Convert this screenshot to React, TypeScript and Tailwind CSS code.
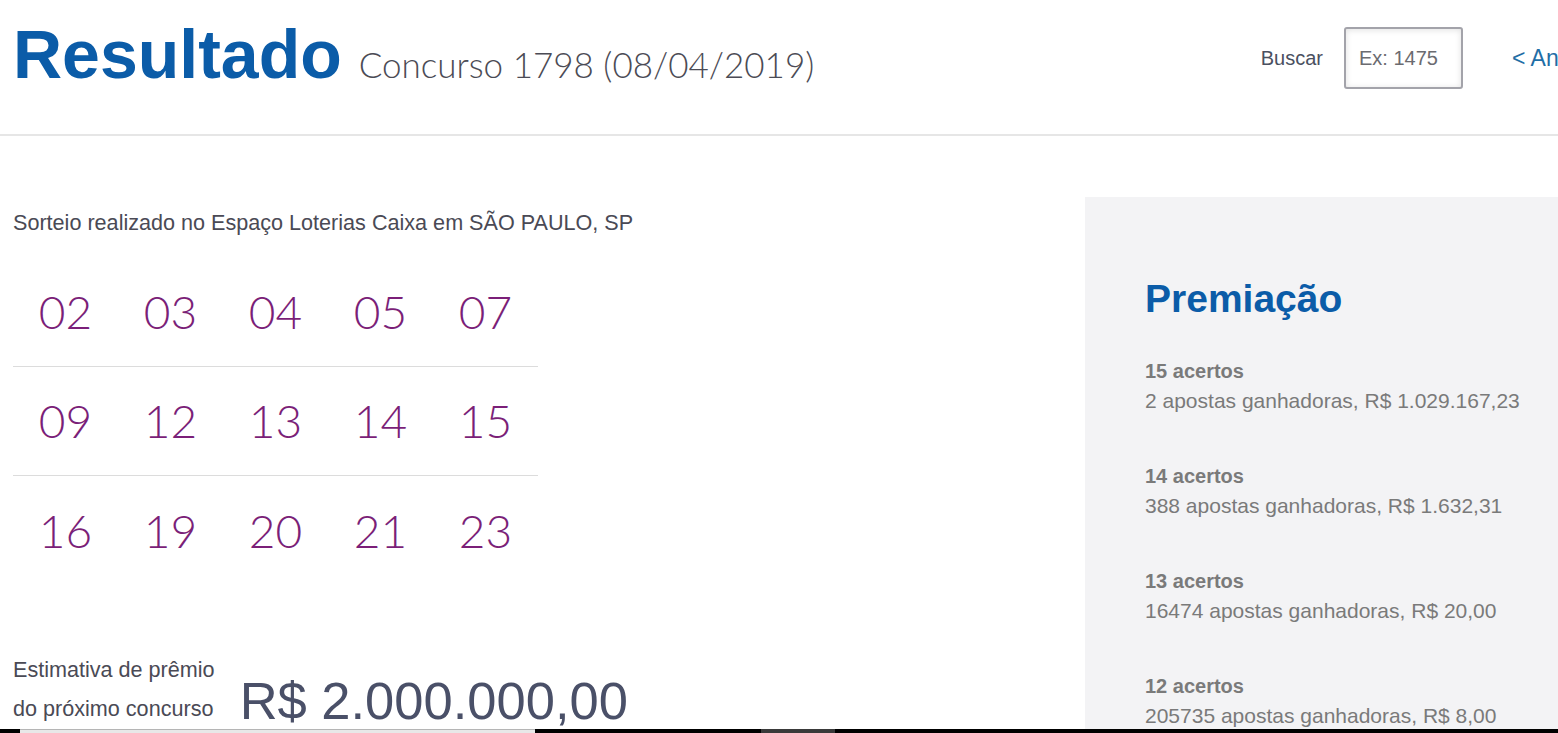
import type { FC } from 'react'

const numeros = [
  ['02', '03', '04', '05', '07'],
  ['09', '12', '13', '14', '15'],
  ['16', '19', '20', '21', '23'],
]

const premios = [
  { faixa: '15 acertos', detalhe: '2 apostas ganhadoras, R$ 1.029.167,23' },
  { faixa: '14 acertos', detalhe: '388 apostas ganhadoras, R$ 1.632,31' },
  { faixa: '13 acertos', detalhe: '16474 apostas ganhadoras, R$ 20,00' },
  { faixa: '12 acertos', detalhe: '205735 apostas ganhadoras, R$ 8,00' },
]

const sans = "font-['Liberation_Sans',Arial,sans-serif]"

const Header: FC = () => (
  <div className="flex items-start h-[136px] pl-[13px] border-b-2 border-[#e6e6e6] overflow-hidden whitespace-nowrap">
    <div className="flex items-baseline pt-[20px]">
      <h1 className={`${sans} text-[68px] leading-none font-bold text-[#0b5ca8]`}>Resultado</h1>
      <span className="ml-[17px] font-['Lato',sans-serif] font-light text-[35px] leading-none text-[#4b4b55]">
        Concurso 1798 (08/04/2019)
      </span>
    </div>
    <div className="ml-auto flex items-center pt-[27px] shrink-0">
      <span className={`${sans} text-[20px] text-[#4a5060]`}>Buscar</span>
      <input
        className={`${sans} ml-[21px] w-[119px] h-[62px] border-2 border-[#a3a3aa] rounded-[3px] px-[13px] text-[20px] text-[#555] placeholder:text-[#6b6b70] shadow-[inset_0_1px_6px_rgba(0,0,0,0.12)] outline-none`}
        placeholder="Ex: 1475"
      />
      <a className={`${sans} ml-[49px] text-[23px] text-[#1f6ea6] w-[46px] overflow-hidden`} href="#">
        &lt; Anterior
      </a>
    </div>
  </div>
)

const Resultado: FC = () => (
  <div className="w-[1085px] shrink-0 pl-[13px] pt-[13px]">
    <p className={`${sans} text-[21.6px] leading-[26px] text-[#4a4a55]`}>
      Sorteio realizado no Espaço Loterias Caixa em SÃO PAULO, SP
    </p>
    <div className="mt-[22px] w-[525px]">
      {numeros.map((linha, i) => (
        <div
          key={i}
          className={`grid grid-cols-5 h-[109px] items-center ${i < 2 ? 'border-b border-[#dcdcdc]' : ''}`}
        >
          {linha.map((n) => (
            <span key={n} className="text-center font-['Lato',sans-serif] font-light text-[46px] leading-none text-[#7b1f78]">
              {n}
            </span>
          ))}
        </div>
      ))}
    </div>
    <div className="mt-[65px] flex items-end">
      <div className={`${sans} text-[21.6px] leading-[39px] text-[#4a4a55]`}>
        <div>Estimativa de prêmio</div>
        <div>do próximo concurso</div>
      </div>
      <span className={`${sans} ml-[25px] mb-[1px] text-[52.5px] leading-none text-[#4a5068]`}>R$ 2.000.000,00</span>
    </div>
  </div>
)

const Premiacao: FC = () => (
  <div className="flex-1 bg-[#f3f3f5] pl-[60px] pt-[82px] whitespace-nowrap">
    <h2 className={`${sans} text-[39px] leading-none font-bold text-[#0b5ca8]`}>Premiação</h2>
    <div className="mt-[38px] flex flex-col gap-[45px]">
      {premios.map((p) => (
        <div key={p.faixa} className={`${sans} text-[#7a7a7a]`}>
          <div className="text-[20px] leading-[30px] font-bold">{p.faixa}</div>
          <div className="text-[21px] leading-[30px]">{p.detalhe}</div>
        </div>
      ))}
    </div>
  </div>
)

export default function App() {
  return (
    <div className="w-[1558px] h-[733px] overflow-hidden flex flex-col bg-white">
      <div className="flex-1 min-h-0 overflow-hidden flex flex-col">
        <Header />
        <div className="flex flex-1 pt-[61px] min-h-0">
          <Resultado />
          <Premiacao />
        </div>
      </div>
      <div className="h-[4px] shrink-0 bg-black flex">
        <div className="ml-[20px] w-[515px] bg-[#e8e8e8] border-t border-[#b5b5b5]" />
        <div className="ml-[226px] w-[74px] bg-[#3a3a3a]" />
      </div>
    </div>
  )
}
